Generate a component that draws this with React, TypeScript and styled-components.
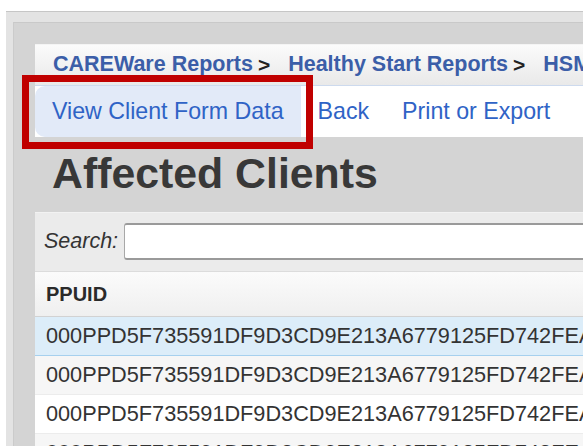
import React from 'react';
import styled, { createGlobalStyle } from 'styled-components';

const GlobalStyle = createGlobalStyle`
  html, body {
    margin: 0;
    padding: 0;
    background: #ffffff;
    overflow: hidden;
  }
  body {
    font-family: "Liberation Sans", Arial, sans-serif;
    color: #333333;
  }
`;

const Page = styled.div`
  padding: 11px 0 0 6px;
  width: 760px;
`;

const OuterFrame = styled.div`
  background: #e3e3e3;
  border-top: 1px solid #c6c6c6;
  padding: 10px 0 0 7px;
`;

const InnerFrame = styled.div`
  background: #d4d4d4;
  border-top: 1px solid #c9c9c9;
  border-left: 1px solid #cbcbcb;
  padding: 21px 0 0 21px;
`;

const Content = styled.div`
  display: flex;
  flex-direction: column;
`;

const Breadcrumbs = styled.div`
  display: flex;
  align-items: center;
  height: 41px;
  padding: 0 0 1px 18px;
  box-sizing: border-box;
  background: linear-gradient(#fbfbfb, #e9e9e9);
  border-top: 1px solid #f4f4f4;
  white-space: nowrap;
`;

const Crumb = styled.a`
  font-size: 21.5px;
  font-weight: bold;
  color: #3b5ea8;
  text-decoration: none;
`;

const CrumbSep = styled.span`
  font-size: 21px;
  font-weight: bold;
  color: #222222;
  margin: 0 18px 0 5px;
`;

const NavBar = styled.div`
  display: flex;
  align-items: stretch;
  height: 51px;
  background: #ffffff;
  border-top: 1px solid #cddaee;
  white-space: nowrap;
`;

const NavItem = styled.a<{ $active?: boolean; $pad: number }>`
  position: relative;
  display: flex;
  align-items: center;
  padding: 0 ${(p) => p.$pad}px 1px;
  font-size: 23.2px;
  color: #2f63c6;
  text-decoration: none;
  background: ${(p) => (p.$active ? '#e2eaf8' : 'transparent')};
  border-radius: ${(p) => (p.$active ? '10px 0 0 10px' : '0')};
`;

// red outline drawn around the highlighted link
const Callout = styled.span`
  position: absolute;
  left: -13px;
  top: -11px;
  right: -12px;
  bottom: -12px;
  border: 7px solid #c00000;
  z-index: 2;
  pointer-events: none;
`;

const Heading = styled.h1`
  margin: 0 0 2px;
  padding-left: 17px;
  font-size: 42.8px;
  line-height: 73px;
  font-weight: bold;
  color: #383838;
`;

const TableBox = styled.div`
  display: flex;
  flex-direction: column;
  background: #ffffff;
`;

const SearchBar = styled.div`
  display: flex;
  align-items: center;
  height: 60px;
  padding: 0 0 2px 9px;
  box-sizing: border-box;
  background: #ebebeb;
  border-top: 1px solid #f2f2f2;
  border-bottom: 1px solid #dcdcdc;
`;

const SearchLabel = styled.label`
  font-size: 21.5px;
  font-style: italic;
  color: #333333;
  margin-right: 6px;
`;

const SearchInput = styled.input`
  flex: 1;
  height: 37px;
  box-sizing: border-box;
  border: 1px solid #a8a8a8;
  border-top: 2px solid #9a9a9a;
  border-bottom: 2px solid #9a9a9a;
  border-radius: 3px 0 0 3px;
  background: #ffffff;
  outline: none;
`;

const HeaderRow = styled.div`
  display: flex;
  align-items: center;
  height: 44px;
  padding-left: 11px;
  background: linear-gradient(#fbfbfb, #efefef);
  border-bottom: 1px solid #d2d2d2;
  font-size: 20px;
  font-weight: bold;
  color: #2a2a2a;
`;

const Row = styled.div<{ $tone: 'selected' | 'odd' | 'even' }>`
  display: flex;
  align-items: center;
  height: 38px;
  padding-left: 11px;
  font-size: 21.7px;
  color: #333333;
  white-space: nowrap;
  background: ${(p) =>
    p.$tone === 'selected' ? '#dcedf9' : p.$tone === 'odd' ? '#f6f6f6' : '#ffffff'};
  border-bottom: 1px solid ${(p) => (p.$tone === 'selected' ? '#a6d0ee' : '#ececec')};
`;

const ppuid = '000PPD5F735591DF9D3CD9E213A6779125FD742FEA8C21';

const rows: Array<'selected' | 'odd' | 'even'> = ['selected', 'odd', 'even', 'odd'];

export default function App() {
  return (
    <>
      <GlobalStyle />
      <Page>
        <OuterFrame>
          <InnerFrame>
            <Content>
              <Breadcrumbs>
                <Crumb href="#">CAREWare Reports</Crumb>
                <CrumbSep>&gt;</CrumbSep>
                <Crumb href="#">Healthy Start Reports</Crumb>
                <CrumbSep>&gt;</CrumbSep>
                <Crumb href="#">HSMIS Validation</Crumb>
              </Breadcrumbs>
              <NavBar>
                <NavItem href="#" $active $pad={17}>
                  View Client Form Data
                  <Callout />
                </NavItem>
                <NavItem href="#" $pad={17}>Back</NavItem>
                <NavItem href="#" $pad={16}>Print or Export</NavItem>
              </NavBar>
              <Heading>Affected Clients</Heading>
              <TableBox>
                <SearchBar>
                  <SearchLabel>Search:</SearchLabel>
                  <SearchInput type="text" />
                </SearchBar>
                <HeaderRow>PPUID</HeaderRow>
                {rows.map((tone, i) => (
                  <Row key={i} $tone={tone}>
                    {ppuid}
                  </Row>
                ))}
              </TableBox>
            </Content>
          </InnerFrame>
        </OuterFrame>
      </Page>
    </>
  );
}
